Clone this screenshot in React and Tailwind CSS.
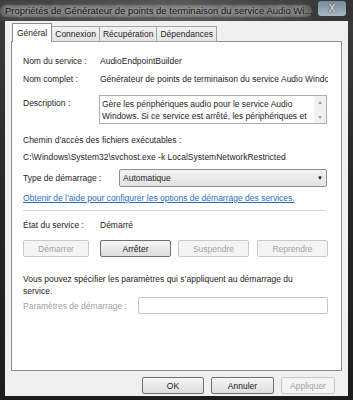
import React from 'react';

const font = { fontFamily: '"Liberation Sans", Arial, sans-serif' };

const Btn = ({ children, disabled, className = '' }) => (
  <div
    className={
      'flex items-center justify-center rounded-[2px] border h-[17px] ' +
      (disabled
        ? 'border-[#c9c9c9] bg-[#f4f4f4] text-[#a3a3a3] '
        : 'border-[#707070] bg-gradient-to-b from-[#f6f6f6] to-[#dddddd] text-[#1a1a1a] ') +
      className
    }
  >
    {children}
  </div>
);

const tabs = ['Connexion', 'Récupération', 'Dépendances'];

export default function App() {
  return (
    <div
      className="w-[353px] h-[400px] bg-gradient-to-b from-[#3c3c3c] via-[#262626] to-[#1c1c1c] flex flex-col overflow-hidden text-[8.5px] leading-[12px] text-[#1e1e1e]"
      style={font}
    >
      {/* title bar */}
      <div className="h-[21px] flex items-center relative bg-gradient-to-r from-[#3e3e3e] via-[#565656] to-[#333333]">
        <div className="pl-[5px] text-[9.5px] text-[#111] whitespace-nowrap bg-[#8c8c8c]/40 rounded-[6px] [text-shadow:0_0_5px_#fff,0_0_8px_#ddd]">
          Propriétés de Générateur de points de terminaison du service Audio Wi...
        </div>
        <div className="absolute left-[318px] top-[1px] w-[28px] h-[15px] rounded-[3px] bg-gradient-to-b from-[#8fa7b9] to-[#c9e6f5] opacity-75 flex items-center justify-center">
          <span className="text-[10px] font-bold text-white [text-shadow:0_0_2px_#333]">X</span>
        </div>
      </div>

      {/* body */}
      <div className="mx-[5px] h-[375px] bg-[#f0f0f0] flex flex-col">
        {/* tabs */}
        <div className="flex items-end pl-[7px] pt-[2px] h-[21px] relative z-10">
          <div className="h-[19px] px-[4px] bg-white border border-b-0 border-[#898c95] flex items-center">
            Général
          </div>
          {tabs.map(t => (
            <div
              key={t}
              className="h-[16px] px-[3px] bg-gradient-to-b from-[#f2f2f2] to-[#e3e3e3] border border-l-0 border-[#a0a3aa] flex items-center"
            >
              {t}
            </div>
          ))}
        </div>

        {/* panel */}
        <div className="mx-[6px] -mt-[1px] h-[330px] bg-white border border-[#898c95] pl-[11px] pt-[13px] flex flex-col">
          <div className="flex">
            <div className="w-[77px]">Nom du service :</div>
            <div>AudioEndpointBuilder</div>
          </div>
          <div className="flex mt-[6px]">
            <div className="w-[77px] shrink-0">Nom complet :</div>
            <div className="w-[228px] whitespace-nowrap overflow-hidden">
              Générateur de points de terminaison du service Audio Windows
            </div>
          </div>
          <div className="flex mt-[10px]">
            <div className="w-[76px] shrink-0 mt-[2px]">Description :</div>
            <div className="w-[228px] h-[29px] border border-[#abadb3] flex">
              <div className="flex-1 pl-[2px] pt-[2px] leading-[12px] overflow-hidden">
                Gère les périphériques audio pour le service Audio Windows. Si ce service est arrêté, les périphériques et
              </div>
              <div className="w-[12px] bg-[#f0f0f0] flex flex-col justify-between items-center py-[3px] text-[5px] leading-[6px] text-[#8a8a8a]">
                <span>▲</span>
                <span>▼</span>
              </div>
            </div>
          </div>
          <div className="mt-[10px]">Chemin d’accès des fichiers exécutables :</div>
          <div className="mt-[5px] whitespace-nowrap">
            C:\Windows\System32\svchost.exe -k LocalSystemNetworkRestricted
          </div>
          <div className="flex items-center mt-[6px]">
            <div className="w-[96px]">Type de démarrage :</div>
            <div className="w-[208px] h-[18px] border border-[#8e8f8f] bg-gradient-to-b from-[#f3f3f3] to-[#e2e2e2] flex items-center justify-between px-[3px] rounded-[2px]">
              <span>Automatique</span>
              <span className="text-[6px] text-[#111]">▼</span>
            </div>
          </div>
          <div className="mt-[5px] text-[#2a6cbf] underline whitespace-nowrap">
            Obtenir de l’aide pour configurer les options de démarrage des services.
          </div>
          <div className="mt-[6px] w-[302px] h-px bg-[#d5d5d5]" />
          <div className="flex mt-[8px]">
            <div className="w-[77px]">État du service :</div>
            <div>Démarré</div>
          </div>
          <div className="flex mt-[9px]">
            <Btn disabled className="w-[66px]">Démarrer</Btn>
            <Btn className="w-[71px] ml-[11px]">Arrêter</Btn>
            <Btn disabled className="w-[71px] ml-[7px]">Suspendre</Btn>
            <Btn disabled className="w-[71px] ml-[8px]">Reprendre</Btn>
          </div>
          <div className="mt-[16px] w-[300px]">
            Vous pouvez spécifier les paramètres qui s’appliquent au démarrage du service.
          </div>
          <div className="flex items-center">
            <div className="w-[115px] text-[#a0a0a0]">Paramètres de démarrage :</div>
            <div className="w-[190px] h-[17px] border border-[#c5c5c5] rounded-[2px]" />
          </div>
        </div>

        {/* bottom buttons */}
        <div className="flex justify-end pr-[13px] mt-[6px]">
          <Btn className="w-[62px]">OK</Btn>
          <Btn className="w-[63px] ml-[7px]">Annuler</Btn>
          <Btn disabled className="w-[54px] ml-[7px]">Appliquer</Btn>
        </div>
      </div>
    </div>
  );
}
